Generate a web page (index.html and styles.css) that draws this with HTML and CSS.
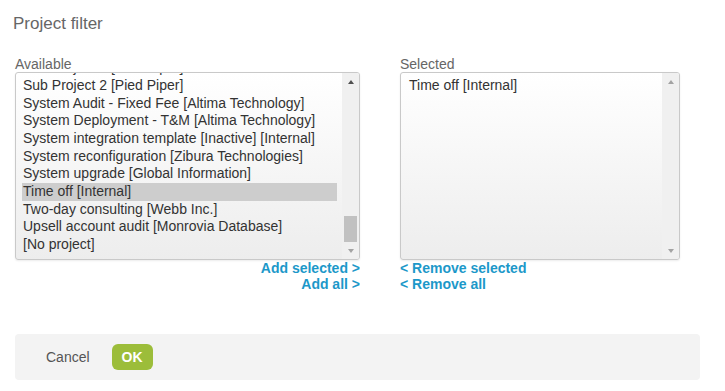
FILE: index.html
```html
<!DOCTYPE html>
<html>
<head>
    <meta charset="UTF-8">
    <title>Project filter</title>
    <link rel="stylesheet" href="styles.css">
</head>
<body>
    <div class="dialog">
        <h1 class="title">Project filter</h1>

        <div class="picker">
            <div class="column column-available">
                <div class="column-label">Available</div>
                <div class="listbox">
                    <ul class="options options-available">
                        <li>Sub Project 1 [Pied Piper]</li>
                        <li>Sub Project 2 [Pied Piper]</li>
                        <li>System Audit - Fixed Fee [Altima Technology]</li>
                        <li>System Deployment - T&amp;M [Altima Technology]</li>
                        <li>System integration template [Inactive] [Internal]</li>
                        <li>System reconfiguration [Zibura Technologies]</li>
                        <li>System upgrade [Global Information]</li>
                        <li class="selected">Time off [Internal]</li>
                        <li>Two-day consulting [Webb Inc.]</li>
                        <li>Upsell account audit [Monrovia Database]</li>
                        <li>[No project]</li>
                    </ul>
                    <div class="scrollbar">
                        <span class="arrow arrow-up"></span>
                        <div class="track"><div class="thumb"></div></div>
                        <span class="arrow arrow-down"></span>
                    </div>
                </div>
                <div class="actions actions-add">
                    <a href="#">Add selected &gt;</a>
                    <a href="#">Add all &gt;</a>
                </div>
            </div>

            <div class="column column-selected">
                <div class="column-label">Selected</div>
                <div class="listbox">
                    <ul class="options options-selected">
                        <li>Time off [Internal]</li>
                    </ul>
                    <div class="scrollbar disabled">
                        <span class="arrow arrow-up"></span>
                        <div class="track"></div>
                        <span class="arrow arrow-down"></span>
                    </div>
                </div>
                <div class="actions actions-remove">
                    <a href="#">&lt; Remove selected</a>
                    <a href="#">&lt; Remove all</a>
                </div>
            </div>
        </div>

        <div class="footer">
            <button class="cancel-button">Cancel</button>
            <button class="ok-button">OK</button>
        </div>
    </div>
</body>
</html>
```

FILE: styles.css
```css
body {
    margin: 0;
    background-color: #ffffff;
    font-family: "Liberation Sans", Arial, sans-serif;
    color: #333333;
}

.dialog {
    padding: 14px 25px 0 15px;
}

.title {
    margin: 0 0 22px -2px;
    font-size: 17px;
    font-weight: normal;
    line-height: 20px;
    color: #666666;
}

.picker {
    display: flex;
    gap: 40px;
}

.column-available {
    width: 345px;
}

.column-selected {
    width: 280px;
}

.column-label {
    font-size: 14px;
    line-height: 16px;
    color: #666666;
}

.listbox {
    display: flex;
    height: 188px;
    box-sizing: border-box;
    border: 1px solid #c9c9c9;
    border-radius: 3px;
    background: linear-gradient(to bottom, #ffffff 0%, #ededed 100%);
    box-shadow: 0 1px 2px rgba(0, 0, 0, 0.08);
    overflow: hidden;
}

.options {
    flex: 1;
    margin: 0 5px 0 6px;
    padding: 0;
    list-style: none;
    overflow: hidden;
    font-size: 14px;
}

.options li {
    height: 17.67px;
    line-height: 17.67px;
    padding-left: 1px;
    white-space: nowrap;
}

.options-available li:first-child {
    margin-top: -13.67px;
}

.options li.selected {
    background-color: #cdcdcd;
}

.options-selected {
    margin-left: 7px;
    padding-top: 4px;
}

.scrollbar {
    display: flex;
    flex-direction: column;
    width: 17px;
    background-color: #f0f0f0;
}

.arrow {
    display: flex;
    justify-content: center;
    align-items: center;
    height: 17px;
}

.arrow::before {
    content: "";
    border-left: 3.5px solid transparent;
    border-right: 3.5px solid transparent;
}

.arrow-up::before {
    border-bottom: 4px solid #505050;
}

.arrow-down::before {
    border-top: 4px solid #a3a3a3;
}

.scrollbar.disabled .arrow-up::before {
    border-bottom-color: #a3a3a3;
}

.track {
    flex: 1;
    display: flex;
    flex-direction: column;
    justify-content: flex-end;
}

.thumb {
    height: 26px;
    margin: 0 2px;
    background-color: #c1c1c1;
}

.actions {
    display: flex;
    flex-direction: column;
}

.actions-add {
    align-items: flex-end;
}

.actions-remove {
    align-items: flex-start;
}

.actions a {
    font-size: 14px;
    font-weight: bold;
    line-height: 16px;
    color: #1c98c9;
    text-decoration: none;
}

.footer {
    display: flex;
    align-items: center;
    margin-top: 42px;
    height: 46px;
    box-sizing: border-box;
    padding: 0 0 1px 31px;
    background-color: #f3f3f3;
    border-radius: 4px;
}

.cancel-button {
    padding: 0;
    border: none;
    background: none;
    font-family: "Liberation Sans", Arial, sans-serif;
    font-size: 14px;
    line-height: 26px;
    color: #555555;
    cursor: pointer;
}

.ok-button {
    margin-left: 22px;
    width: 41px;
    height: 26px;
    padding: 0;
    border: none;
    border-radius: 6px;
    background-color: #9cbd3a;
    font-family: "Liberation Sans", Arial, sans-serif;
    font-size: 14px;
    font-weight: bold;
    color: #ffffff;
    cursor: pointer;
}
```
